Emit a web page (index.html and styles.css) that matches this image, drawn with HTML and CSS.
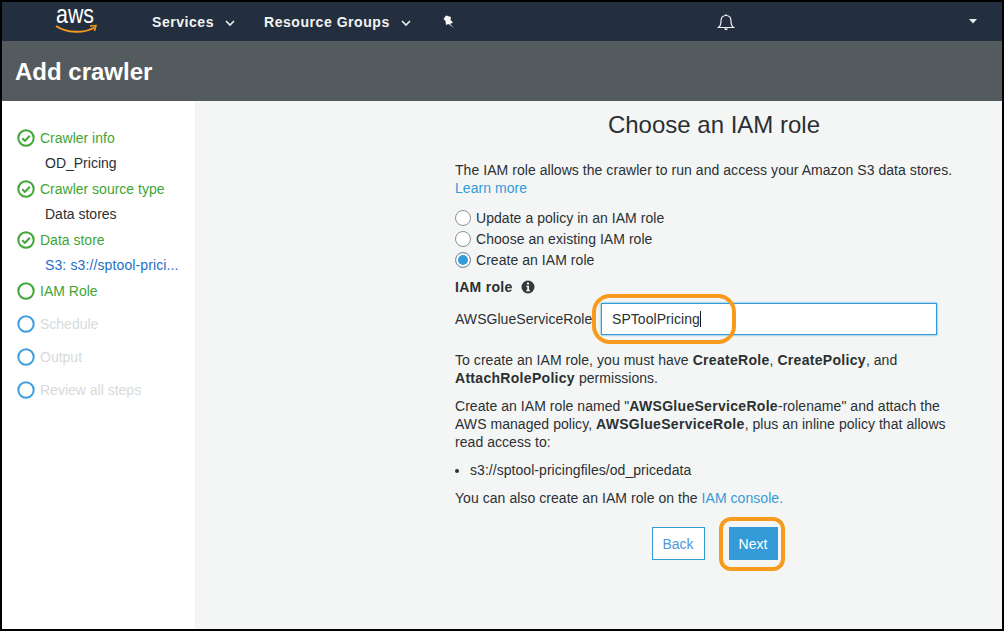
FILE: index.html
```html
<!DOCTYPE html>
<html lang="en">
<head>
  <meta charset="UTF-8" />
  <title>Add crawler</title>
  <link rel="stylesheet" href="styles.css">
</head>
<body>
  <div class="frame">
    <nav class="topbar">
      <svg class="logo" width="44" height="34" viewBox="0 0 44 34">
        <text x="21" y="17.500" text-anchor="middle" textLength="38" lengthAdjust="spacingAndGlyphs" class="logo-text">aws</text>
        <path d="M2 21C13 28.500 30 28.500 40.500 22.500" fill="none" stroke="#f79a1f" stroke-width="2"/>
        <path d="M36 21L42 20.500L40.500 26" fill="none" stroke="#f79a1f" stroke-width="1.500"/>
      </svg>
      <span class="nav-item services">Services
        <svg class="chev" width="10" height="6" viewBox="0 0 10 6"><path d="M1 1l4 4 4-4" fill="none" stroke="#e8ebed" stroke-width="1.700"/></svg>
      </span>
      <span class="nav-item groups">Resource Groups
        <svg class="chev" width="10" height="6" viewBox="0 0 10 6"><path d="M1 1l4 4 4-4" fill="none" stroke="#e8ebed" stroke-width="1.700"/></svg>
      </span>
      <svg class="pin" width="12" height="14" viewBox="0 0 12 14"><path d="M3 .5L8 2 7.500 5 10 7.500 7 9l4.500 4.500L5.500 9 3 10 2.500 6 .5 4z" fill="#f7f8f8"/></svg>
      <svg class="bell" width="18" height="18" viewBox="0 0 18 18"><path d="M1.500 14.500c2-1.500 2.500-3.500 2.500-6.500 0-3.500 2-5.500 5-5.500s5 2 5 5.500c0 3 .5 5 2.500 6.500z" fill="none" stroke="#f2f3f3" stroke-width="1.200"/><path d="M8.500 1h1v2h-1z M7 15.500h4l-1 1.500h-2z" fill="#f2f3f3"/></svg>
      <svg class="caret" width="8" height="5" viewBox="0 0 8 5"><path d="M0 0h8L4 4.500z" fill="#e8ebed"/></svg>
    </nav>

    <header class="page-head">Add crawler</header>

    <div class="body">
      <aside class="sidebar">
        <div class="step done">
          <svg class="step-icon" width="18" height="18" viewBox="0 0 18 18"><circle cx="9" cy="9" r="7.700"/><path d="M5.300 9.300l2.600 2.600 4.900-5.100"/></svg>
          Crawler info
        </div>
        <div class="sub">OD_Pricing</div>
        <div class="step done">
          <svg class="step-icon" width="18" height="18" viewBox="0 0 18 18"><circle cx="9" cy="9" r="7.700"/><path d="M5.300 9.300l2.600 2.600 4.900-5.100"/></svg>
          Crawler source type
        </div>
        <div class="sub">Data stores</div>
        <div class="step done">
          <svg class="step-icon" width="18" height="18" viewBox="0 0 18 18"><circle cx="9" cy="9" r="7.700"/><path d="M5.300 9.300l2.600 2.600 4.900-5.100"/></svg>
          Data store
        </div>
        <div class="sub sub-link">S3: s3://sptool-prici...</div>
        <div class="step done">
          <svg class="step-icon" width="18" height="18" viewBox="0 0 18 18"><circle cx="9" cy="9" r="7.700"/></svg>
          IAM Role
        </div>
        <div class="step todo">
          <svg class="step-icon" width="18" height="18" viewBox="0 0 18 18"><circle cx="9" cy="9" r="7.700"/></svg>
          Schedule
        </div>
        <div class="step todo">
          <svg class="step-icon" width="18" height="18" viewBox="0 0 18 18"><circle cx="9" cy="9" r="7.700"/></svg>
          Output
        </div>
        <div class="step todo">
          <svg class="step-icon" width="18" height="18" viewBox="0 0 18 18"><circle cx="9" cy="9" r="7.700"/></svg>
          Review all steps
        </div>
      </aside>

      <main class="content">
        <h1>Choose an IAM role</h1>
        <p class="intro">The IAM role allows the crawler to run and access your Amazon S3 data stores. <a>Learn more</a></p>

        <div class="radios">
          <label class="radio"><span class="dot"></span>Update a policy in an IAM role</label>
          <label class="radio"><span class="dot"></span>Choose an existing IAM role</label>
          <label class="radio"><span class="dot on"></span>Create an IAM role</label>
        </div>

        <div class="field-label">IAM role
          <svg width="14" height="14" viewBox="0 0 14 14"><circle cx="7" cy="7" r="6.500" fill="#33393c"/><rect x="6" y="2.500" width="2" height="2" fill="#f4f6f6"/><path d="M5.300 5.800H8V10h1v1.200H5.200V10h1V7H5.300z" fill="#f4f6f6"/></svg>
        </div>

        <div class="role-row">
          <span class="prefix">AWSGlueServiceRole</span>
          <div class="role-input">SPToolPricing<span class="cursor"></span></div>
          <span class="ring ring-input"></span>
        </div>

        <p class="perm">To create an IAM role, you must have <b>CreateRole</b>, <b>CreatePolicy</b>, and <b>AttachRolePolicy</b> permissions.</p>
        <p class="named">Create an IAM role named "<b>AWSGlueServiceRole</b>-rolename" and attach the AWS managed policy, <b>AWSGlueServiceRole</b>, plus an inline policy that allows read access to:</p>
        <ul>
          <li>s3://sptool-pricingfiles/od_pricedata</li>
        </ul>
        <p class="console">You can also create an IAM role on the <a>IAM console.</a></p>

        <div class="actions">
          <button class="btn back">Back</button>
          <div class="next-wrap">
            <button class="btn next">Next</button>
            <span class="ring ring-next"></span>
          </div>
        </div>
      </main>
    </div>
  </div>
</body>
</html>
```

FILE: styles.css
```css
* {
  box-sizing: border-box;
}

html, body {
  margin: 0;
  height: 100%;
}

body {
  font-family: "Liberation Sans", Arial, sans-serif;
  font-size: 14px;
  color: #2b3033;
  background: #000;
}

.frame {
  height: 631px;
  border: 2px solid #000;
  display: flex;
  flex-direction: column;
  overflow: hidden;
}

.topbar {
  height: 39px;
  background: #232f3e;
  display: flex;
  align-items: center;
  color: #f2f3f3;
  flex-shrink: 0;
}

.logo {
  margin-left: 52px;
  overflow: visible;
}

.logo-text {
  font-family: "Liberation Sans", Arial, sans-serif;
  font-size: 25px;
  fill: #fff;
}

.nav-item {
  font-size: 14px;
  font-weight: bold;
  letter-spacing: .55px;
  display: flex;
  align-items: center;
  gap: 11px;
}

.services {
  margin-left: 54px;
}

.groups {
  margin-left: 29px;
}

.chev {
  margin-top: 2px;
}

.pin {
  margin-left: 32px;
}

.bell {
  margin-left: 262px;
}

.caret {
  margin-left: 234px;
}

.page-head {
  height: 60px;
  background: #545b5e;
  color: #fff;
  font-size: 24px;
  font-weight: bold;
  padding: 2px 0 0 13px;
  display: flex;
  align-items: center;
  flex-shrink: 0;
}

.body {
  flex: 1;
  display: flex;
  background: #f4f6f6;
}

.sidebar {
  width: 193px;
  background: #fff;
  padding-top: 28px;
  flex-shrink: 0;
}

.step {
  height: 18px;
  display: flex;
  align-items: center;
  gap: 5px;
  padding-left: 15px;
}

.step-icon {
  fill: none;
  stroke-width: 2;
  flex-shrink: 0;
}

.step.done {
  color: #3fa535;
  stroke: #3fa535;
}

.step.todo {
  color: #d5dbdb;
  stroke: #3f9fdc;
  margin-top: 15px;
}

.sub {
  height: 33px;
  padding: 7px 0 0 43px;
  line-height: 18px;
}

.sub-link {
  color: #1f6fc4;
  letter-spacing: .12px;
}

.content {
  width: 518px;
  margin-left: 260px;
  letter-spacing: .05px;
}

h1 {
  font-size: 24px;
  font-weight: normal;
  letter-spacing: 0;
  text-align: center;
  margin: 10px 0 0;
  line-height: 28px;
}

p {
  margin: 0;
  line-height: 18px;
  max-width: 505px;
}

b {
  letter-spacing: .3px;
}

a {
  color: #349bd8;
}

.intro {
  margin-top: 22px;
}

.radios {
  margin-top: 12px;
  display: flex;
  flex-direction: column;
  gap: 3px;
}

.radio {
  height: 18px;
  display: flex;
  align-items: center;
  gap: 5px;
}

.dot {
  width: 16px;
  height: 16px;
  border-radius: 50%;
  background: #fff;
  border: 1px solid #8b9296;
}

.dot.on {
  background: #349bd8;
  box-shadow: inset 0 0 0 2px #fff;
}

.field-label {
  font-weight: bold;
  letter-spacing: .3px;
  margin-top: 9px;
  height: 18px;
  display: flex;
  align-items: center;
  gap: 8px;
}

.role-row {
  position: relative;
  display: flex;
  align-items: center;
  margin-top: 7px;
  height: 32px;
}

.prefix {
  width: 146px;
}

.role-input {
  width: 336px;
  height: 32px;
  background: #fff;
  border: 1px solid #349bd8;
  box-shadow: 0 0 2px #349bd8;
  padding-left: 10px;
  line-height: 30px;
}

.cursor {
  display: inline-block;
  width: 1px;
  height: 16px;
  background: #16191f;
  vertical-align: -3px;
}

.ring {
  position: absolute;
  border: 4px solid #f89b1c;
  pointer-events: none;
}

.ring-input {
  left: 137px;
  top: -9px;
  width: 144px;
  height: 50px;
  border-radius: 18px;
}

.perm {
  margin-top: 16px;
}

.named {
  margin-top: 10px;
}

ul {
  margin: 10px 0 0;
  padding: 0 0 0 15px;
  line-height: 18px;
}

.console {
  margin-top: 10px;
}

.actions {
  display: flex;
  justify-content: center;
  gap: 24px;
  margin-top: 20px;
  padding-left: 19px;
  width: 500px;
}

.btn {
  font-family: inherit;
  font-size: 14px;
  width: 53px;
  height: 33px;
  padding: 0;
  border: 1px solid #349bd8;
}

.back {
  background: #fff;
  color: #4f97d8;
}

.next {
  display: block;
  width: 49px;
  background: #349bd8;
  color: #fff;
}

.next-wrap {
  position: relative;
}

.ring-next {
  left: -10px;
  top: -10px;
  width: 66px;
  height: 54px;
  border-radius: 12px;
}
```
